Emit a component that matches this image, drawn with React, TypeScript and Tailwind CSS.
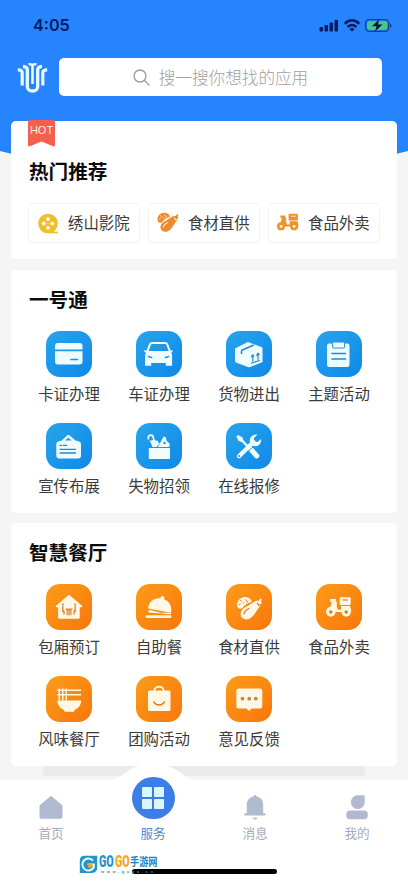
import React from 'react';
import type { ReactNode } from 'react';

interface ServiceItem {
  label: string;
  icon: ReactNode;
}

/* Glyphs share a 46x46 box, the size of the tile they sit in */

const CardGlyph = () => (
  <>
    <path fill="currentColor" d="M12 12h21.500a3 3 0 0 1 3 3v3.400H9V15a3 3 0 0 1 3-3Z" />
    <path fill="currentColor" d="M9 20.200h27.500v10.300a3 3 0 0 1-3 3H12a3 3 0 0 1-3-3Z" />
    <path d="M25 28.500h6.500" stroke="#1a94e6" strokeWidth="1.700" strokeLinecap="round" />
  </>
);

const CarGlyph = () => (
  <>
    <path
      fill="currentColor"
      fillRule="evenodd"
      d="M16.500 11h12.200c2 0 3 .8 3.700 2.600l2.200 6 2.200-.3-.6 2-1.100.5c.8 1 1 2.200 1 3.700v9.200h-6.300v-2.800H15.200v2.800H9v-9.200c0-1.500.3-2.700 1.100-3.700L8.600 21 8 19.300l2.600.3 2.200-6c.7-1.800 1.700-2.600 3.700-2.600Zm-.1 2c-.9 0-1.300.4-1.700 1.300L12.600 20h20l-2.100-5.700c-.4-.9-.8-1.300-1.700-1.300Z"
    />
    <path d="m11.500 24.500 5 1.600-.4 1.200c-2.700-.2-4.200-.9-4.600-2.800Zm22 0-5 1.600.4 1.200c2.700-.2 4.200-.9 4.600-2.800Z" fill="#1a94e6" />
  </>
);

const BoxGlyph = () => (
  <>
    <path fill="currentColor" d="m22.500 11.200 13 4.800c.7.300 1 .7 1 1.400v12.800c0 .7-.3 1.100-1 1.400L24 36c-.7.300-1.300.3-2 0L9.900 31.500c-.6-.3-.9-.7-.9-1.400V18.500c0-.7.3-1.100.9-1.400l11-5.700c.6-.3 1-.4 1.600-.2Z" />
    <path d="M15.500 23v-2.800c0-.6.300-.9.900-1.200l11.400-5" fill="none" stroke="#2389cc" strokeWidth="1.500" />
    <path d="M26.800 30.500v-6.300m-1.500 2 1.500-2.300 1.500 1.500M32 28.800v-6.200m-1.500 2 1.500-2.300 1.500 1.500M25 32.300l9-3" fill="none" stroke="#2389cc" strokeWidth="1.200" />
  </>
);

const ClipboardGlyph = () => (
  <>
    <rect x="11" y="12.500" width="22.500" height="23.500" rx="2.200" fill="currentColor" />
    <rect x="16.600" y="11" width="12" height="6" rx=".8" fill="currentColor" stroke="#1a94e6" strokeWidth="1" />
    <path d="M16 22.500h13.500M16 28h13.500" stroke="#1a8ad6" strokeWidth="1.600" strokeLinecap="round" />
  </>
);

const PosterGlyph = () => (
  <>
    <path fill="currentColor" fillRule="evenodd" d="m21.500 12.100 1.700 0 6.300 5.400 3 .8c1.700.5 2.500 1.300 2.500 3v11.200a3 3 0 0 1-3 3H13.300a3 3 0 0 1-3-3V21.300c0-1.700.8-2.500 2.500-3l3-.8Zm.8 2.700-3.300 2.700h6.700Z" />
    <path d="M14 22.400h1.700m1.800 0h3.200M14 26.300h15.500M14 30h15.500" stroke="#1a8ad6" strokeWidth="1.300" strokeLinecap="round" />
  </>
);

const LostGlyph = () => (
  <>
    <rect x="12.800" y="25" width="21.200" height="11" rx=".6" fill="currentColor" />
    <path d="M12.300 15.700v-1c0-3.300 4.800-3.500 5 0l1.600 5" fill="none" stroke="currentColor" strokeWidth="1.700" strokeLinecap="round" />
    <path fill="currentColor" d="M13.500 17c1.500 1.300 3 .3 4.300-.8.600 1.300 2 1.700 4 1.300-.4 1.300.3 2.200 1.800 2.400L20.600 24h-4Z" />
    <path fill="currentColor" d="M21.800 24 27.700 13.500l2 .8 1 3.700 2.600 2.300c.8 1.200.5 3.700-1 3.700Z" />
    <circle cx="28.500" cy="20" r="1.200" fill="#1a94e6" />
  </>
);

const RepairGlyph = () => (
  <>
    <path d="m12.200 14.200 2.800 2.200 8.200 8.500" fill="none" stroke="currentColor" strokeWidth="2.200" />
    <path fill="currentColor" d="m10.300 13.500 2-1.500 4.300 2.600.7 3-1.700 1.500-3-1Z" />
    <path d="m24.600 26 6.200 7" stroke="currentColor" strokeWidth="5" strokeLinecap="round" />
    <path d="M13 33.300 27.300 19" stroke="currentColor" strokeWidth="4.300" strokeLinecap="round" />
    <path fill="currentColor" d="M31.500 11.600c-3.500-.8-8.300 2-7.600 6.700.6 4.100 4.500 5.800 7.500 4.600 2.800-1.100 4.200-3.500 3.500-7l-3.300 3-3.300-.7-.6-3Z" />
    <circle cx="13.200" cy="33" r=".9" fill="#1a94e6" />
    <path d="m22.200 28.500 4.600-4.600" stroke="#1a94e6" strokeWidth="1" />
  </>
);

const HouseGlyph = () => (
  <>
    <path fill="currentColor" d="M22 11.500c.7-.6 1.300-.6 2 0l12 10.300c.6.600.4 1.400-.5 1.400h-1.800v10c0 1-.6 1.500-1.500 1.500H13.600c-.9 0-1.500-.5-1.500-1.500v-10h-1.600c-.9 0-1.100-.8-.5-1.400Z" />
    <g fill="none" stroke="#e2862f" strokeWidth="1.300">
      <path d="M16.800 22v3.500l1.200 2v3.300M29.200 22v3.500l-1.200 2v3.300M16.800 25v3m12.400-3v3" />
    </g>
    <path fill="#e2862f" d="M19.500 24.500h7v1.200h-1v5.600h-5v-5.600h-1Z" />
    <path d="M22 26.500v4.800m2-4.800v4.800" stroke="currentColor" strokeWidth=".6" />
    <circle cx="17" cy="20.500" r="1.100" fill="#e2862f" />
    <circle cx="29" cy="20.500" r="1.100" fill="#e2862f" />
  </>
);

const ClocheGlyph = () => (
  <>
    <path fill="currentColor" d="M12.300 23.200c.8-5.700 6-9.600 12-8.800.2-1.200.6-2.300 2-2.300 1.900 0 2.600 1.600 1.700 3.200 4.800 1.800 7.800 6 7.300 11.600-.1 1.100-.6 1.800-1.800 1.600L13.300 24.700c-.8-.2-1.100-.7-1-1.500Z" />
    <path fill="currentColor" d="M12.500 25.800 28 29.600l-15.300-.8Zm11.500 3h11.200l-.3 1.400h-5Z" />
    <rect x="9.500" y="31.200" width="26" height="2.800" rx="1.400" fill="currentColor" />
  </>
);

const VegetableGlyph = ({ line = '#e2761b' }: { line?: string }) => (
  <>
    <path fill="currentColor" d="M12 23.800c-2.200-3.300-.4-8 3.200-9.900 4.800-2.400 10.300.3 10.500 4.100-4 .8-6.800 2.800-9.300 6-1.200.9-3.200 1.200-4.400-.2Z" />
    <path d="m14.500 16.500 1 .8m4.300-1.800.7 1.300m-7.200 3.700 1-.4m3-1 .7-.7m3-.3.800-.4" stroke={line} strokeWidth="1" strokeLinecap="round" />
    <path fill="currentColor" d="M34.500 14.500c-.8.400-1.200 1.700-2.200 2.300-4.200-.4-7 3.300-10.800 5.200-4.900 2.300-7.300 5-6.800 9 .6 3.700 4.200 5.200 8 4 4.800-1.500 6.700-6.800 9.500-10.500 2.500-3 4-4.300 3-6.500-.3-1.200.5-2 .5-2.700Z" />
    <path d="M17.800 30c.8-2.800 2.600-4.400 5.200-5.500m8.200-5.500 1.400 2.300 2-.7" fill="none" stroke={line} strokeWidth="1.200" strokeLinecap="round" />
  </>
);

const ScooterGlyph = ({ line = '#e2761b' }: { line?: string }) => (
  <>
    <path fill="currentColor" d="M14 15h5.800v2.500h1v5.300l1.200 3h3V22h8.800c1.200 2.500 1.600 4 1.300 6H10.300c0-3 1.400-4.500 4.500-5.500l.8-4.700H14Z" />
    <rect x="23.700" y="13.200" width="11" height="7.800" rx=".8" fill="currentColor" />
    <path d="M26.500 16h5.500" stroke={line} strokeWidth="1.100" />
    <circle cx="14.800" cy="28" r="4.700" fill="currentColor" />
    <circle cx="30.200" cy="28" r="4.700" fill="currentColor" />
    <circle cx="14.800" cy="28" r="1.700" fill={line} />
    <circle cx="30.200" cy="28" r="1.700" fill={line} />
  </>
);

const NoodleGlyph = () => (
  <>
    <path fill="currentColor" d="M11.300 24.500h23.900c-.2 4.800-2.800 7.700-6.700 9.600l-.5 1.700h-9.400l-.5-1.700c-4-2-6.600-4.800-6.800-9.600Z" />
    <path d="M11.300 14.300H35M11.300 18.800H35M13.200 12.500v12m3.500-12v12m3.500-12v12" stroke="currentColor" strokeWidth="1.500" />
  </>
);

const BagGlyph = () => (
  <>
    <path d="M18.500 17v-2.500c0-5 9-5 9 0V17" fill="none" stroke="currentColor" strokeWidth="2" />
    <rect x="12" y="14.500" width="22.500" height="20.500" rx="1.500" fill="currentColor" />
    <path d="M20 14.500c.5-2.200 5.500-2.200 6 0" fill="none" stroke="#f88a12" strokeWidth="1.300" />
    <path d="M17.800 26c2.300 4 8.200 4 10.500 0" fill="none" stroke="#d9761f" strokeWidth="1.500" strokeLinecap="round" />
  </>
);

const ChatGlyph = () => (
  <>
    <path fill="currentColor" d="M12.800 12.500h21a2.500 2.500 0 0 1 2.500 2.500v15a2.500 2.500 0 0 1-2.500 2.500h-8.200L23 35l-2.600-2.500h-7.600a2.500 2.500 0 0 1-2.500-2.500V15a2.500 2.500 0 0 1 2.500-2.500Z" />
    <g fill="#c6854a">
      <circle cx="16.500" cy="22.700" r="1.900" />
      <circle cx="23.200" cy="22.700" r="1.900" />
      <circle cx="29.800" cy="22.700" r="1.900" />
    </g>
  </>
);

const FilmGlyph = () => (
  <svg width="21" height="21" viewBox="0 0 21 21" className="text-[#f1bd2c]">
    <circle cx="10" cy="10.500" r="9.800" fill="currentColor" />
    <path d="M10 18.600h10v1.700H10Z" fill="currentColor" />
    <g fill="#fffbe6">
      <circle cx="10" cy="6.200" r="1.900" />
      <circle cx="10" cy="14.800" r="1.900" />
      <circle cx="5.700" cy="10.500" r="1.900" />
      <circle cx="14.300" cy="10.500" r="1.900" />
      <circle cx="10" cy="10.500" r=".6" />
    </g>
  </svg>
);

const passItems: ServiceItem[] = [
  { label: '卡证办理', icon: <CardGlyph /> },
  { label: '车证办理', icon: <CarGlyph /> },
  { label: '货物进出', icon: <BoxGlyph /> },
  { label: '主题活动', icon: <ClipboardGlyph /> },
  { label: '宣传布展', icon: <PosterGlyph /> },
  { label: '失物招领', icon: <LostGlyph /> },
  { label: '在线报修', icon: <RepairGlyph /> },
];

const diningItems: ServiceItem[] = [
  { label: '包厢预订', icon: <HouseGlyph /> },
  { label: '自助餐', icon: <ClocheGlyph /> },
  { label: '食材直供', icon: <VegetableGlyph /> },
  { label: '食品外卖', icon: <ScooterGlyph /> },
  { label: '风味餐厅', icon: <NoodleGlyph /> },
  { label: '团购活动', icon: <BagGlyph /> },
  { label: '意见反馈', icon: <ChatGlyph /> },
];

const hotItems: ServiceItem[] = [
  { label: '绣山影院', icon: <FilmGlyph /> },
  {
    label: '食材直供',
    icon: (
      <svg width="22" height="22" viewBox="10.500 12 26 26" className="text-[#ee8a2c]">
        <VegetableGlyph line="#fff3e0" />
      </svg>
    ),
  },
  {
    label: '食品外卖',
    icon: (
      <svg width="22" height="22" viewBox="10 11 26 26" className="text-[#ee922c]">
        <ScooterGlyph line="#fff3e0" />
      </svg>
    ),
  },
];

function StatusBar() {
  return (
    <div className="flex h-[50px] items-center justify-between pl-[33px] pr-[16px] text-[#041a63]">
      <span className="font-['Inter'] text-[16.200px] leading-5 font-semibold">4:05</span>
      <div className="flex items-center gap-[5px]">
        <svg width="20" height="13" viewBox="0 0 20 13" fill="currentColor">
          <rect x="0.500" y="8" width="3.500" height="4.500" rx="1" />
          <rect x="5.500" y="6" width="3.500" height="6.500" rx="1" />
          <rect x="10.500" y="3.500" width="3.500" height="9" rx="1" />
          <rect x="15.500" y="0.700" width="3.500" height="11.800" rx="1" />
        </svg>
        <svg width="16" height="13" viewBox="0 0 16 13" fill="none" stroke="currentColor" strokeWidth="2.500">
          <path d="M.8 4.800C5 .2 11 .2 15.200 4.800M3.500 8c2.600-2.800 6.400-2.800 9 0" />
          <path d="M8 12.500 5.300 9.900c1.500-1.300 3.900-1.300 5.400 0Z" fill="currentColor" stroke="none" />
        </svg>
        <svg width="27" height="13" viewBox="0 0 27 13">
          <rect x=".7" y=".7" width="23" height="11.600" rx="3.500" fill="none" stroke="#123f8c" strokeWidth="1.300" />
          <rect x="2.200" y="2.200" width="20" height="8.600" rx="2" fill="#45c795" />
          <path d="M25 4.500c2 .5 2 3.500 0 4Z" fill="#123f8c" />
          <path d="M14 .5 7 7.300h4.500L10 12.500l7.500-7H13Z" fill="#04123f" />
        </svg>
      </div>
    </div>
  );
}

function Header() {
  return (
    <header className="h-[157px] bg-[#2684fe] [clip-path:polygon(0_0,100%_0,100%_151px,94%_157px,6%_157px,0_151px)]">
      <StatusBar />
      <div className="mt-[8px] flex items-center pl-[17px] pr-[26px]">
        <svg width="31" height="32" viewBox="0 0 31 32" fill="none" stroke="#eafcff" strokeWidth="3.300" className="mt-[1px]">
          <path d="M.8 7.800c3 0 4.400.7 4.400 3v12.700M30.200 7.800c-3 0-4.400.7-4.400 3v12.700" strokeWidth="3.200" />
          <path d="M6 4.500c3.200.2 4.300 1 4.300 3.500v16.500c0 6 10.400 6 10.400 0V8c0-2.500 1.100-3.300 4.300-3.500" />
          <path d="M11.500 2.300c3.300-.3 4 .2 4 2.200V22M15.500 4.500c0-2 .7-2.500 4-2.200" strokeWidth="2.600" />
        </svg>
        <div className="ml-[11px] flex h-[38px] flex-1 items-center justify-center rounded-[5px] bg-white">
          <svg width="17" height="17" viewBox="0 0 17 17" fill="none" stroke="#999" strokeWidth="1.300" strokeLinecap="round">
            <circle cx="7" cy="7" r="6" />
            <path d="m11.500 11.500 4.500 4.500" />
          </svg>
          <span className="ml-[9px] text-[16.600px] leading-6 font-light text-[#a0a0a0]">搜一搜你想找的应用</span>
        </div>
      </div>
    </header>
  );
}

function HotCard() {
  return (
    <section className="relative mb-[1px] h-[138px] rounded-[5px] bg-white px-[17px] pt-[36px]">
      <div className="absolute top-[-1px] left-[17px] h-[27px] w-[27px] rounded-[2px] bg-[#f5604d] pt-[3px] text-center font-['Liberation_Sans'] text-[11px] leading-[14px] text-[#fff0eb] [clip-path:polygon(0_0,100%_0,100%_100%,50%_80%,0_100%)]">
        HOT
      </div>
      <h2 className="pl-[1px] text-[19.600px] leading-[28px] font-bold text-[#0c0c0c]">热门推荐</h2>
      <div className="mt-[18px] flex gap-[8px]">
        {hotItems.map((item) => (
          <div key={item.label} className="flex h-[40px] w-[112px] items-center rounded-[4px] border border-[#f2f2f2] pl-[8px]">
            <span className="flex w-[22px] shrink-0 justify-center">{item.icon}</span>
            <span className="mt-[-2px] ml-[9px] text-[15.400px] leading-6 whitespace-nowrap text-[#3a3a3a]">{item.label}</span>
          </div>
        ))}
      </div>
    </section>
  );
}

interface ServiceCardProps {
  title: string;
  items: ServiceItem[];
  tileClass: string;
}

function ServiceCard({ title, items, tileClass }: ServiceCardProps) {
  return (
    <section className="h-[243px] rounded-[5px] bg-white px-[13px] pt-[15px]">
      <h2 className="pl-[5px] text-[19.600px] leading-[28px] font-bold text-[#0c0c0c]">{title}</h2>
      <div className="mt-[18px] grid grid-cols-4">
        {items.map((item) => (
          <div key={item.label} className="flex h-[92px] flex-col items-center">
            <div className={`h-[46px] w-[46px] rounded-[14px] ${tileClass}`}>
              <svg width="46" height="46" viewBox="0 0 46 46">
                {item.icon}
              </svg>
            </div>
            <span className="mt-[4px] text-[15.400px] leading-6 whitespace-nowrap text-[#3a3a3a]">{item.label}</span>
          </div>
        ))}
      </div>
    </section>
  );
}

function TabBar() {
  return (
    <nav className="relative grid h-[103px] grid-cols-4 bg-white text-[12.600px] leading-[18px] text-[#a3abbd]">
      {/* Raised hump behind the active tab */}
      <svg width="92" height="18" viewBox="0 0 92 18" className="absolute top-[-17px] left-[107px]" fill="#fff">
        <path d="M0 18C18 16 20 1 46 1s28 15 46 17Z" />
      </svg>
      <div className="flex flex-col items-center pt-[15px]">
        <svg width="24" height="26" viewBox="0 0 24 26" fill="#b0bad0">
          <path d="M10.900 1.700c.7-.6 1.500-.6 2.200 0l9.600 8c.5.400.8 1 .8 1.700v10.700c0 1-.6 1.600-1.600 1.600H2.100c-1 0-1.600-.6-1.600-1.600V11.400c0-.7.3-1.300.8-1.700Z" />
        </svg>
        <span className="mt-[3px]">首页</span>
      </div>
      <div className="relative flex flex-col items-center text-[#5589cc]">
        <div className="mt-[-3px] flex h-[42px] w-[43px] items-center justify-center rounded-full bg-[#3b7ee6]">
          <div className="grid grid-cols-2 gap-[2px]">
            <span className="h-[10px] w-[10px] rounded-[1px] bg-[#dcf6ff]" />
            <span className="h-[10px] w-[10px] rounded-[1px] bg-[#dcf6ff]" />
            <span className="h-[10px] w-[10px] rounded-[1px] bg-[#dcf6ff]" />
            <span className="h-[10px] w-[10px] rounded-[1px] bg-[#dcf6ff]" />
          </div>
        </div>
        <span className="mt-[5px]">服务</span>
      </div>
      <div className="flex flex-col items-center pt-[15px]">
        <svg width="22" height="26" viewBox="0 0 22 26" fill="#b0bad0">
          <path d="M11 0c.9 0 1.500.6 1.600 1.500 4.200.9 6.600 4 6.600 8.300v8.400h1.500c1.300 0 1.300 2.200 0 2.200H1.300c-1.300 0-1.300-2.200 0-2.200h1.500V9.800c0-4.300 2.400-7.400 6.600-8.300C9.500.6 10.100 0 11 0Z" />
          <path d="M8.500 22.800h5c-.4 2.400-4.600 2.400-5 0Z" />
        </svg>
        <span className="mt-[3px]">消息</span>
      </div>
      <div className="flex flex-col items-center pt-[15px]">
        <svg width="22" height="26" viewBox="0 0 22 26" fill="#b0bad0">
          <path d="M11.500.3h6c.8 0 1.200.5 1.200 1.200v5.600a6.900 6.900 0 1 1-7.200-6.800Z" />
          <rect x=".3" y="15.600" width="21.500" height="8.600" rx="3.600" />
        </svg>
        <span className="mt-[3px]">我的</span>
      </div>
      <div className="absolute top-[89px] left-[132px] h-[5px] w-[145px] rounded-full bg-black" />
      <Watermark />
    </nav>
  );
}

function Watermark() {
  return (
    <div className="absolute top-[75px] left-[79px] flex items-start">
      <svg width="19" height="19" viewBox="0 0 19 19">
        <path d="M5 .8h13.200V13a5 5 0 0 1-5 5H.8V5A4.200 4.200 0 0 1 5 .8Z" fill="#2295c9" />
        <path d="M14 5.700a6 6 0 1 0 .8 6.300V9.500H9.500" fill="none" stroke="#e8fbff" strokeWidth="2" />
        <path d="M8 9.300h4.500v2.500H9" fill="none" stroke="#f6a821" strokeWidth="1.500" />
      </svg>
      <div className="ml-[1px]">
        <div className="flex h-[13px] items-center leading-[13px] whitespace-nowrap">
          <span className="w-[16px] origin-left scale-x-[.67] font-['Roboto'] text-[16px] font-black text-[#1d94d0]">GO</span>
          <span className="w-[15px] origin-left scale-x-[.67] font-['Roboto'] text-[16px] font-black text-[#f7a51c]">GO</span>
          <span className="origin-left scale-x-[.83] text-[11px] font-bold text-[#1583c4]">手游网</span>
        </div>
        <div className="pt-[2px] pl-[2px] font-['Liberation_Sans'] text-[4px] leading-[4px] font-bold tracking-[2.600px] text-[#2a8fc4]">www.gogo.cn</div>
      </div>
    </div>
  );
}

export default function App() {
  return (
    <div className="flex h-[883px] w-[408px] flex-col overflow-hidden bg-[#f5f5f5] font-['Noto_Sans_CJK_SC',sans-serif]">
      <Header />
      <main className="relative -mt-[36px] flex h-[659px] flex-col gap-[10px] px-[11px]">
        <HotCard />
        <ServiceCard title="一号通" items={passItems} tileClass="text-[#effcff] bg-linear-to-br from-[#27a5ec] to-[#0f88e8]" />
        <ServiceCard title="智慧餐厅" items={diningItems} tileClass="text-[#fff8e6] bg-linear-to-br from-[#fc9c18] to-[#f8760c]" />
        <div className="mx-[32px] -mt-[10px] h-[10px] bg-[#ebebeb]" />
      </main>
      <TabBar />
    </div>
  );
}
